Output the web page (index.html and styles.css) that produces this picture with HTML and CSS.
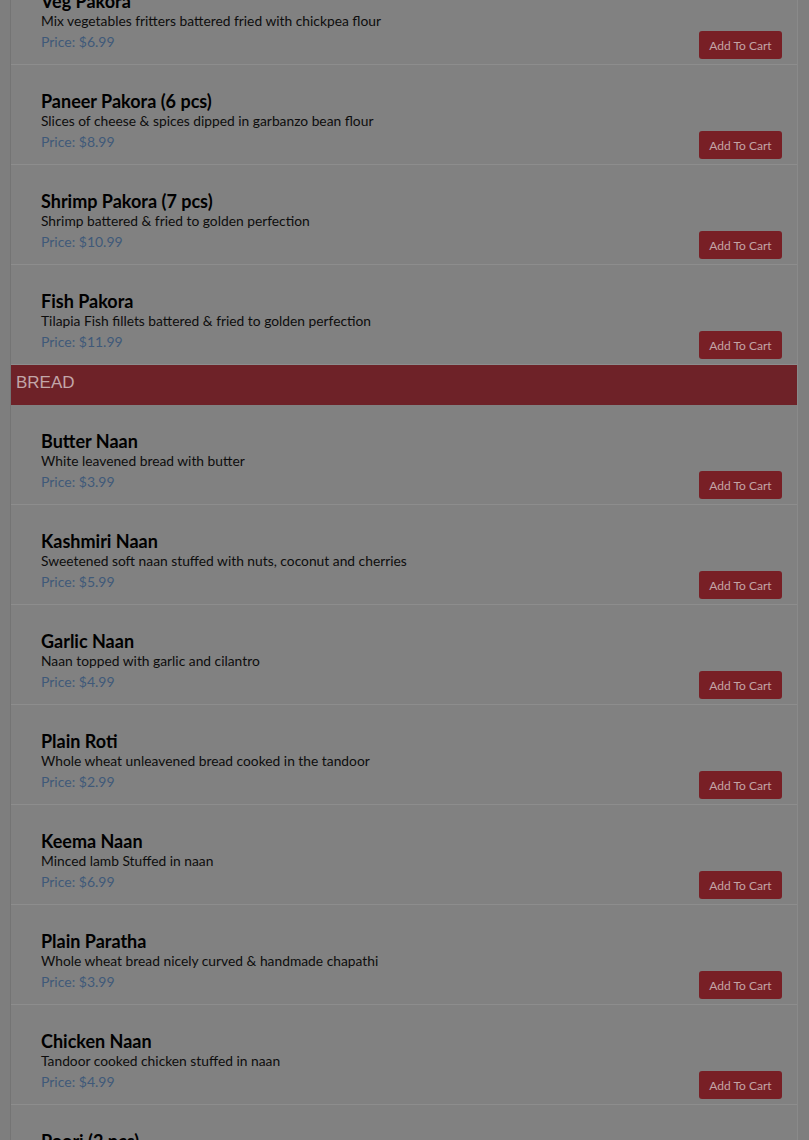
FILE: index.html
```html
<!DOCTYPE html>
<html>
<head>
<meta charset="utf-8">
<link rel="stylesheet" href="styles.css">
</head>
<body>
<div class="page">
  <div class="menu">
    <div class="item">
      <div class="info">
        <div class="name">Veg Pakora</div>
        <div class="desc">Mix vegetables fritters battered fried with chickpea flour</div>
        <div class="price">Price: $6.99</div>
      </div>
      <button class="cart">Add To Cart</button>
    </div>
    <div class="item">
      <div class="info">
        <div class="name">Paneer Pakora (6 pcs)</div>
        <div class="desc">Slices of cheese &amp; spices dipped in garbanzo bean flour</div>
        <div class="price">Price: $8.99</div>
      </div>
      <button class="cart">Add To Cart</button>
    </div>
    <div class="item">
      <div class="info">
        <div class="name">Shrimp Pakora (7 pcs)</div>
        <div class="desc">Shrimp battered &amp; fried to golden perfection</div>
        <div class="price">Price: $10.99</div>
      </div>
      <button class="cart">Add To Cart</button>
    </div>
    <div class="item">
      <div class="info">
        <div class="name">Fish Pakora</div>
        <div class="desc">Tilapia Fish fillets battered &amp; fried to golden perfection</div>
        <div class="price">Price: $11.99</div>
      </div>
      <button class="cart">Add To Cart</button>
    </div>
    <div class="category">BREAD</div>
    <div class="item">
      <div class="info">
        <div class="name">Butter Naan</div>
        <div class="desc">White leavened bread with butter</div>
        <div class="price">Price: $3.99</div>
      </div>
      <button class="cart">Add To Cart</button>
    </div>
    <div class="item">
      <div class="info">
        <div class="name">Kashmiri Naan</div>
        <div class="desc">Sweetened soft naan stuffed with nuts, coconut and cherries</div>
        <div class="price">Price: $5.99</div>
      </div>
      <button class="cart">Add To Cart</button>
    </div>
    <div class="item">
      <div class="info">
        <div class="name">Garlic Naan</div>
        <div class="desc">Naan topped with garlic and cilantro</div>
        <div class="price">Price: $4.99</div>
      </div>
      <button class="cart">Add To Cart</button>
    </div>
    <div class="item">
      <div class="info">
        <div class="name">Plain Roti</div>
        <div class="desc">Whole wheat unleavened bread cooked in the tandoor</div>
        <div class="price">Price: $2.99</div>
      </div>
      <button class="cart">Add To Cart</button>
    </div>
    <div class="item">
      <div class="info">
        <div class="name">Keema Naan</div>
        <div class="desc">Minced lamb Stuffed in naan</div>
        <div class="price">Price: $6.99</div>
      </div>
      <button class="cart">Add To Cart</button>
    </div>
    <div class="item">
      <div class="info">
        <div class="name">Plain Paratha</div>
        <div class="desc">Whole wheat bread nicely curved &amp; handmade chapathi</div>
        <div class="price">Price: $3.99</div>
      </div>
      <button class="cart">Add To Cart</button>
    </div>
    <div class="item">
      <div class="info">
        <div class="name">Chicken Naan</div>
        <div class="desc">Tandoor cooked chicken stuffed in naan</div>
        <div class="price">Price: $4.99</div>
      </div>
      <button class="cart">Add To Cart</button>
    </div>
    <div class="item">
      <div class="info">
        <div class="name">Poori (2 pcs)</div>
        <div class="desc">Deep fried puffed whole wheat bread</div>
        <div class="price">Price: $3.99</div>
      </div>
      <button class="cart">Add To Cart</button>
    </div>
  </div>
</div>
</body>
</html>
```

FILE: styles.css
```css
html, body {
  margin: 0;
  padding: 0;
  background: #7e7e7e;
  overflow: hidden;
}

.page {
  padding: 0 11px 0 10px;
  margin-top: -35px;
}

.menu {
  background: #818181;
  border-left: 1px solid #747474;
  border-right: 1px solid #8a8a8a;
  font-family: Lato, "Source Sans Pro", "Liberation Sans", sans-serif;
}

.item {
  height: 99px;
  box-sizing: content-box;
  border-bottom: 1px solid #8d8d8d;
  display: flex;
  justify-content: space-between;
  align-items: flex-end;
  padding: 0 15px 0 30px;
}

.info {
  padding-top: 26px;
  align-self: flex-start;
}

.name {
  font-size: 18px;
  line-height: 20px;
  font-weight: bold;
  color: #000;
}

.desc {
  font-size: 13.8px;
  line-height: 20px;
  color: #0d0d0d;
}

.price {
  font-size: 14px;
  line-height: 22px;
  color: #3f5979;
}

.cart {
  margin-bottom: 5px;
  height: 28px;
  padding: 0 10px;
  width: 83px;
  border: none;
  border-radius: 3px;
  background: #781f25;
  color: #c2a4a6;
  font-family: Lato, "Liberation Sans", sans-serif;
  font-size: 12px;
  cursor: pointer;
}

.category {
  height: 40px;
  background: #6e2228;
  color: #c2a6a8;
  font-family: "Liberation Sans", Arial, sans-serif;
  font-size: 17px;
  line-height: 36px;
  padding-left: 5px;
}
```
